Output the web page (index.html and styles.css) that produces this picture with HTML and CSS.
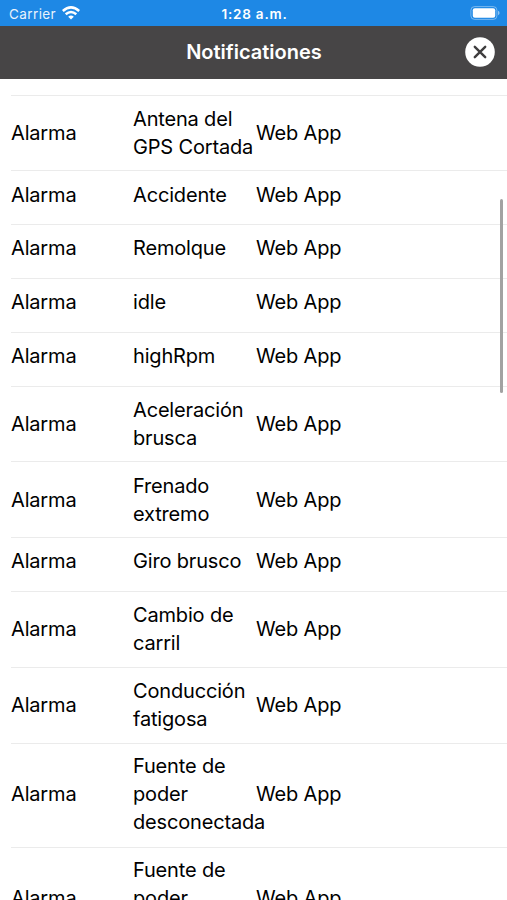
FILE: index.html
```html
<!DOCTYPE html>
<html lang="es">
<head>
<meta charset="utf-8">
<title>Notificationes</title>
<link rel="stylesheet" href="styles.css">
</head>
<body>
<header class="status">
  <div class="carrier"><span class="carrier-name">Carrier</span>
    <svg class="wifi" viewBox="0 0 18 14" width="18" height="14"><g fill="none" stroke="#fff" stroke-width="2.6"><path d="M.8 5Q9-2.2 17.2 5"/><path d="M3.7 8.2Q9 3.8 14.3 8.2"/></g><path d="M6.2 10.7Q9 8.5 11.8 10.7L9 13.5Z" fill="#fff"/></svg>
  </div>
  <span class="time">1:28 a.m.</span>
  <svg class="battery" viewBox="0 0 30 14" width="30" height="14"><rect x=".9" y=".6" width="26" height="12.8" rx="3.6" fill="none" stroke="#fff" stroke-opacity=".4"/><rect x="2.8" y="2.2" width="22.4" height="9.6" rx="2" fill="#fff"/><path d="M28 4.8Q29.6 5.4 29.6 7T28 9.2Z" fill="#fff" fill-opacity=".5"/></svg>
</header>
<div class="navbar">
  <h1 class="title">Notificationes</h1>
  <button class="close" aria-label="Cerrar"><svg viewBox="0 0 30 30" width="30" height="30"><circle cx="15" cy="15" r="14.8" fill="#fff"/><path d="M9.8 9.8L20.2 20.2M20.2 9.8L9.8 20.2" stroke="#3f3d3e" stroke-width="2.4" stroke-linecap="round"/></svg></button>
</div>
<main class="list">
  <div class="row two"><span>Alarma</span><span>Antena del<br>GPS Cortada</span><span>Web App</span></div>
  <div class="row"><span>Alarma</span><span>Accidente</span><span>Web App</span></div>
  <div class="row"><span>Alarma</span><span>Remolque</span><span>Web App</span></div>
  <div class="row"><span>Alarma</span><span>idle</span><span>Web App</span></div>
  <div class="row"><span>Alarma</span><span>highRpm</span><span>Web App</span></div>
  <div class="row two"><span>Alarma</span><span>Aceleración<br>brusca</span><span>Web App</span></div>
  <div class="row two"><span>Alarma</span><span>Frenado<br>extremo</span><span>Web App</span></div>
  <div class="row"><span>Alarma</span><span>Giro brusco</span><span>Web App</span></div>
  <div class="row two"><span>Alarma</span><span>Cambio de<br>carril</span><span>Web App</span></div>
  <div class="row two"><span>Alarma</span><span>Conducción<br>fatigosa</span><span>Web App</span></div>
  <div class="row three"><span>Alarma</span><span>Fuente de<br>poder<br>desconectada</span><span>Web App</span></div>
  <div class="row three"><span>Alarma</span><span>Fuente de<br>poder<br>desconectada</span><span>Web App</span></div>
</main>
<div class="scroll-thumb"></div>
</body>
</html>
```
FILE: styles.css
```css
* { box-sizing: border-box; }
html, body { height: 100%; }
body {
  margin: 0;
  overflow: hidden;
  display: flex;
  flex-direction: column;
  position: relative;
  background: #fff;
  color: #000;
  font-family: Inter, "Liberation Sans", sans-serif;
}
.status {
  flex: none;
  height: 26px;
  padding: 1px 7px 0 9px;
  display: grid;
  grid-template-columns: 1fr auto 1fr;
  align-items: center;
  background: #1e88e5;
  color: #fff;
  font-size: 13.5px;
}
.carrier { display: flex; align-items: center; gap: 6px; }
.carrier-name { letter-spacing: 0.4px; opacity: 0.9; }
.wifi { margin-top: -2px; }
.time { font-weight: 600; letter-spacing: 0.8px; }
.battery { justify-self: end; margin-top: -1px; }
.navbar {
  flex: none;
  height: 53px;
  padding: 0 12px 2px;
  display: grid;
  grid-template-columns: 30px 1fr 30px;
  align-items: center;
  background: #474546;
  color: #fff;
}
.title {
  grid-column: 2;
  margin: 0;
  padding-left: 1px;
  text-align: center;
  font-size: 20px;
  font-weight: 600;
}
.close { width: 30px; height: 30px; padding: 0; border: 0; background: none; }
.close svg { display: block; }
.list { flex: 1; min-height: 0; overflow: hidden; padding: 15.6px 0 0 11px; }
.row {
  height: 53.8px;
  padding-bottom: 6.2px;
  border-top: 1px solid #ebebeb;
  display: grid;
  grid-template-columns: 122px 123px 1fr;
  align-items: center;
  font-size: 20px;
  line-height: 28px;
  letter-spacing: -0.17px;
  white-space: nowrap;
}
.two { height: 75.8px; padding-bottom: 0.4px; }
.three { height: 104px; padding-bottom: 1.4px; }
.scroll-thumb {
  position: absolute;
  top: 199px;
  right: 4px;
  width: 3px;
  height: 194px;
  border-radius: 2px;
  background: #a2a2a2;
}
```
